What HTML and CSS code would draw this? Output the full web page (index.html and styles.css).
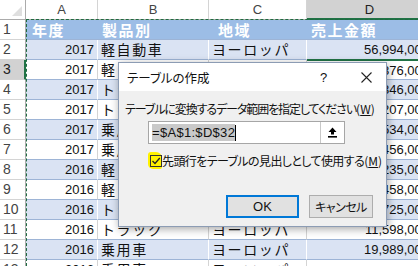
FILE: index.html
```html
<!doctype html>
<html lang="ja">
<head>
    <meta charset="UTF-8">
    <title>テーブルの作成</title>
    <link rel="stylesheet" href="styles.css">
</head>
<body>
<div class="sheet">
    <div class="corner"><span class="tri"></span></div>
    <div class="colhead">A</div>
    <div class="colhead">B</div>
    <div class="colhead">C</div>
    <div class="colhead active">D</div>

    <div class="rowhead">1</div>
    <div class="cell th">年度</div>
    <div class="cell th">製品別</div>
    <div class="cell th">地域</div>
    <div class="cell th">売上金額</div>

    <div class="rowhead">2</div>
    <div class="cell num band">2017</div>
    <div class="cell txt band">軽自動車</div>
    <div class="cell txt band">ヨーロッパ</div>
    <div class="cell num band">56,994,000</div>

    <div class="rowhead active">3</div>
    <div class="cell num">2017</div>
    <div class="cell txt">軽自動車</div>
    <div class="cell txt">北米</div>
    <div class="cell num cur">42,876,000</div>

    <div class="rowhead">4</div>
    <div class="cell num band">2017</div>
    <div class="cell txt band">トラック</div>
    <div class="cell txt band">ヨーロッパ</div>
    <div class="cell num band">12,346,000</div>

    <div class="rowhead">5</div>
    <div class="cell num">2017</div>
    <div class="cell txt">トラック</div>
    <div class="cell txt">北米</div>
    <div class="cell num">18,207,000</div>

    <div class="rowhead">6</div>
    <div class="cell num band">2017</div>
    <div class="cell txt band">乗用車</div>
    <div class="cell txt band">ヨーロッパ</div>
    <div class="cell num band">21,534,000</div>

    <div class="rowhead">7</div>
    <div class="cell num">2017</div>
    <div class="cell txt">乗用車</div>
    <div class="cell txt">北米</div>
    <div class="cell num">33,456,000</div>

    <div class="rowhead">8</div>
    <div class="cell num band">2016</div>
    <div class="cell txt band">軽自動車</div>
    <div class="cell txt band">ヨーロッパ</div>
    <div class="cell num band">51,235,000</div>

    <div class="rowhead">9</div>
    <div class="cell num">2016</div>
    <div class="cell txt">軽自動車</div>
    <div class="cell txt">北米</div>
    <div class="cell num">39,458,000</div>

    <div class="rowhead">10</div>
    <div class="cell num band">2016</div>
    <div class="cell txt band">トラック</div>
    <div class="cell txt band">北米</div>
    <div class="cell num band">16,725,000</div>

    <div class="rowhead">11</div>
    <div class="cell num">2016</div>
    <div class="cell txt">トラック</div>
    <div class="cell txt">ヨーロッパ</div>
    <div class="cell num">11,598,000</div>

    <div class="rowhead">12</div>
    <div class="cell num band">2016</div>
    <div class="cell txt band">乗用車</div>
    <div class="cell txt band">ヨーロッパ</div>
    <div class="cell num band">19,989,000</div>

    <div class="rowhead">13</div>
    <div class="cell num">2016</div>
    <div class="cell txt">乗用車</div>
    <div class="cell txt">ヨーロッパ</div>
    <div class="cell num"></div>
</div>

<!-- 点線の選択範囲 -->
<div class="ants"></div>

<div class="dialog">
    <div class="titlebar">
        <span class="title">テーブルの作成</span>
        <span class="help">?</span>
        <span class="close">
            <svg width="11" height="11" viewBox="0 0 11 11">
                <path d="M0.5 0.5 L10.5 10.5 M10.5 0.5 L0.5 10.5" stroke="#222" stroke-width="1.1"/>
            </svg>
        </span>
    </div>
    <div class="body">
        <div class="label"><span class="jp">テーブルに変換するデータ範囲を指定してください</span>(<u>W</u>)</div>
        <div class="range">
            <span class="sel">=$A$1:$D$32</span><span class="caret"></span>
            <span class="collapse">
                <svg width="9" height="11" viewBox="0 0 9 11">
                    <path d="M4.5 0.5 L8.5 5 H6 V7.5 H3 V5 H0.5 Z" fill="#000"/>
                    <rect x="0" y="9" width="9" height="1.6" fill="#000"/>
                </svg>
            </span>
        </div>
        <label class="check">
            <span class="mark">
                <span class="box">
                    <svg width="10" height="10" viewBox="0 0 10 10">
                        <path d="M1.5 5 L4 7.5 L8.8 2" fill="none" stroke="#222" stroke-width="1.3"/>
                    </svg>
                </span>
            </span>
            <span class="jp2">先頭行をテーブルの見出しとして使用する</span>(<u>M</u>)
        </label>
        <div class="buttons">
            <span class="btn ok">OK</span>
            <span class="btn">キャンセル</span>
        </div>
    </div>
</div>
</body>
</html>
```

FILE: styles.css
```css
* {
    margin: 0;
    padding: 0;
    box-sizing: border-box;
}
body {
    width: 418px;
    height: 266px;
    overflow: hidden;
    position: relative;
    background: #fff;
    font-family: "Liberation Sans", "Noto Sans CJK JP", sans-serif;
}
.sheet {
    display: grid;
    grid-template-columns: 26px 72px 111px 98px 126px;
    grid-auto-rows: 20px;
    width: 433px;
    height: 266px;
    overflow: hidden;
}
.corner {
    background: #fff;
    border-right: 1px solid #ababab;
    border-bottom: 1px solid #ababab;
    position: relative;
}
.corner .tri {
    position: absolute;
    right: 3px;
    bottom: 3px;
    border-left: 10px solid transparent;
    border-bottom: 10px solid #dfdfdf;
}
.colhead {
    background: #fff;
    border-right: 1px solid #d4d4d4;
    border-bottom: 1px solid #ababab;
    text-align: center;
    font-size: 13px;
    line-height: 19px;
    color: #444;
}
.colhead.active {
    background: #d2d2d2;
    border-bottom: 2px solid #217346;
    color: #222;
}
.rowhead {
    background: #fff;
    border-right: 1px solid #ababab;
    border-bottom: 1px solid #d4d4d4;
    font-size: 14px;
    line-height: 19px;
    color: #444;
    padding-left: 3px;
}
.rowhead.active {
    background: #d2d2d2;
    border-right: 2px solid #217346;
    color: #222;
}
.cell {
    border-right: 1px solid #d4d4d4;
    border-bottom: 1px solid #9db4d6;
    font-size: 14px;
    line-height: 19px;
    white-space: nowrap;
    overflow: hidden;
    color: #111;
}
.cell.band {
    background: #dae3f3;
    border-right-color: #fff;
}
.cell.th {
    background: #9cbde6;
    border-right: none;
    color: #fff;
    font-family: "Noto Sans CJK JP", sans-serif;
    font-weight: bold;
    font-size: 15px;
    letter-spacing: 1.5px;
    padding-left: 4px;
}
.cell.th:nth-child(7) {
    padding-left: 6px;
}
.cell.th:nth-child(9) {
    padding-left: 9px;
}
.cell.txt {
    font-family: "Noto Sans CJK JP", sans-serif;
    font-size: 14px;
    letter-spacing: 1.6px;
    padding-left: 3px;
}
.cell.num {
    text-align: right;
    font-size: 13px;
    padding-right: 3px;
}
.cell.cur {
    border-top: 2px solid #217346;
    margin-top: -1px;
}
.ants {
    position: absolute;
    left: 26px;
    top: 19px;
    width: 392px;
    height: 247px;
    border-left: 1px dashed #1e6b41;
    border-top: 1px dashed #1e6b41;
    pointer-events: none;
}

/* ダイアログ */
.dialog {
    position: absolute;
    left: 118px;
    top: 62px;
    width: 269px;
    height: 165px;
    border: 1px solid #8c9cb4;
    background: #f0f0f0;
    box-shadow: 1px 2px 8px rgba(0, 0, 0, 0.35);
    font-family: "Noto Sans CJK JP", sans-serif;
    font-feature-settings: "palt";
    color: #111;
    display: flex;
    flex-direction: column;
}
.titlebar {
    height: 28px;
    background: #fff;
    display: flex;
    align-items: center;
    padding-left: 8px;
    font-size: 12.5px;
}
.title {
    flex: 1;
}
.help {
    font-family: "Liberation Sans", sans-serif;
    font-size: 13px;
    width: 41px;
}
.close {
    width: 25px;
    display: flex;
    align-items: center;
}
.body {
    flex: 1;
    padding: 10px 13px 0 6px;
    display: flex;
    flex-direction: column;
}
.label {
    font-size: 12px;
    line-height: 16px;
    white-space: nowrap;
}
.label .jp {
    letter-spacing: -1.1px;
}
.range {
    margin: 4px 0 0 23px;
    width: 197px;
    height: 23px;
    border: 1px solid #a6a6a6;
    background: #fff;
    display: flex;
    align-items: center;
    padding-left: 3px;
    font-family: "Liberation Sans", sans-serif;
    font-size: 13px;
}
.sel {
    background: #c9c9c9;
    line-height: 17px;
    letter-spacing: 0.3px;
}
.caret {
    width: 1px;
    height: 16px;
    background: #000;
}
.collapse {
    margin-left: auto;
    width: 24px;
    height: 21px;
    border-left: 1px solid #c8c8c8;
    display: flex;
    align-items: center;
    justify-content: center;
}
.check {
    margin: 8px 0 0 23px;
    display: flex;
    align-items: center;
    font-size: 12px;
    line-height: 16px;
    white-space: nowrap;
}
.check .jp2 {
    letter-spacing: -0.6px;
}
.mark {
    width: 19px;
    height: 17px;
    background: #fff200;
    border-radius: 3px 6px 2px 5px;
    display: flex;
    align-items: center;
    padding-left: 2px;
}
.box {
    width: 12px;
    height: 12px;
    border: 1px solid #333;
    display: flex;
    align-items: center;
    justify-content: center;
}
.buttons {
    margin-top: 26px;
    display: flex;
    justify-content: flex-end;
    gap: 10px;
}
.btn {
    width: 64px;
    height: 23px;
    background: #e1e1e1;
    border: 1px solid #adadad;
    font-size: 12px;
    letter-spacing: -0.5px;
    line-height: 21px;
    text-align: center;
}
.btn.ok {
    width: 73px;
    border: 2px solid #0078d7;
    line-height: 19px;
    font-family: "Liberation Sans", sans-serif;
    font-size: 13px;
    letter-spacing: 0;
}
```
